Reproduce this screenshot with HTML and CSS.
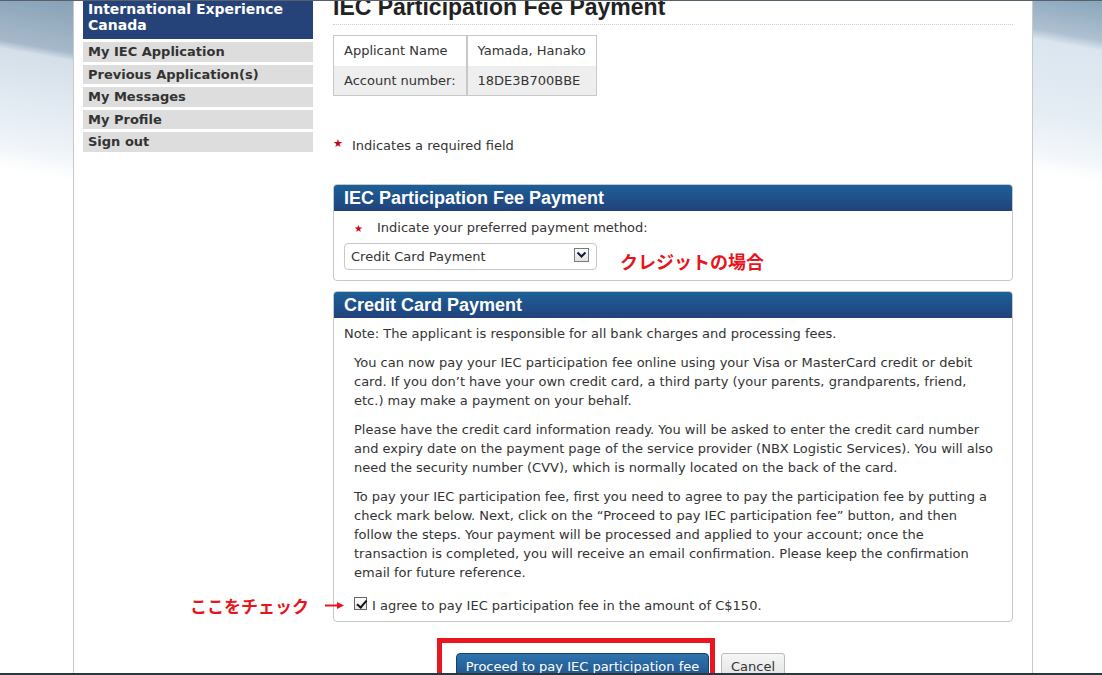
FILE: index.html
```html
<!DOCTYPE html>
<html lang="en">
<head>
    <meta charset="UTF-8">
    <meta name="viewport" content="width=device-width, initial-scale=1.0">
    <title>IEC Participation Fee Payment</title>
    <link rel="stylesheet" href="styles.css">
</head>
<body>
    <div class="page">
        <aside class="side">
            <div class="side-title">International Experience Canada</div>
            <ul class="side-menu">
                <li><a href="#">My IEC Application</a></li>
                <li><a href="#">Previous Application(s)</a></li>
                <li><a href="#">My Messages</a></li>
                <li><a href="#">My Profile</a></li>
                <li><a href="#">Sign out</a></li>
            </ul>
        </aside>

        <main class="main">
            <h1>IEC Participation Fee Payment</h1>

            <table class="info">
                <tr>
                    <td>Applicant Name</td>
                    <td>Yamada, Hanako</td>
                </tr>
                <tr>
                    <td>Account number:</td>
                    <td>18DE3B700BBE</td>
                </tr>
            </table>

            <p class="required"><span class="star">★</span>Indicates a required field</p>

            <section class="panel">
                <h2>IEC Participation Fee Payment</h2>
                <div class="panel-body">
                    <label class="field-label" for="method"><span class="star">★</span>Indicate your preferred payment method:</label>
                    <div class="select-row">
                        <div class="select">
                            <select id="method">
                                <option>Credit Card Payment</option>
                            </select>
                            <span class="select-arrow">
                                <svg width="11" height="8" viewBox="0 0 11 8"><path d="M1.5 1.5 L5.5 5.5 L9.5 1.5" fill="none" stroke="#0d1b36" stroke-width="2"/></svg>
                            </span>
                        </div>
                        <span class="memo memo-select">クレジットの場合</span>
                    </div>
                </div>
            </section>

            <section class="panel">
                <h2>Credit Card Payment</h2>
                <div class="panel-body">
                    <p class="note">Note: The applicant is responsible for all bank charges and processing fees.</p>
                    <p class="text">You can now pay your IEC participation fee online using your Visa or MasterCard credit or debit card. If you don’t have your own credit card, a third party (your parents, grandparents, friend, etc.) may make a payment on your behalf.</p>
                    <p class="text">Please have the credit card information ready. You will be asked to enter the credit card number and expiry date on the payment page of the service provider (NBX Logistic Services). You will also need the security number (CVV), which is normally located on the back of the card.</p>
                    <p class="text">To pay your IEC participation fee, first you need to agree to pay the participation fee by putting a check mark below. Next, click on the “Proceed to pay IEC participation fee” button, and then follow the steps. Your payment will be processed and applied to your account; once the transaction is completed, you will receive an email confirmation. Please keep the confirmation email for future reference.</p>
                    <div class="agree">
                        <span class="memo memo-check">ここをチェック
                            <svg width="20" height="9" viewBox="0 0 20 9"><path d="M0 4.5 H13" stroke="#e8141b" stroke-width="2"/><path d="M12 1 L19 4.5 L12 8 Z" fill="#e8141b"/></svg>
                        </span>
                        <input class="check" type="checkbox" id="agree" checked>
                        <label for="agree">I agree to pay IEC participation fee in the amount of C$150.</label>
                    </div>
                </div>
            </section>

            <div class="actions">
                <div class="mark">
                    <button class="btn-primary">Proceed to pay IEC participation fee</button>
                </div>
                <button class="btn">Cancel</button>
            </div>
        </main>
    </div>
</body>
</html>
```

FILE: styles.css
```css
html {
    overflow: hidden;
}

body {
    margin: 0;
    font-family: "DejaVu Sans", Verdana, sans-serif;
    font-size: 13px;
    color: #333;
    background-color: #fff;
    background-image:
        linear-gradient(190deg, #87a1b7 0px, #a6b9ca 52px, #d4dfe9 60px, #e2eaf2 110px, #eef3f8 150px, #ffffff 178px),
        linear-gradient(190deg, #89a4bb 0px, #aec1d1 40px, #dae5ef 50px, #e5edf4 120px, #f2f6fa 160px, #ffffff 180px);
    background-repeat: no-repeat;
    background-size: 73px 200px, 72px 200px;
    background-position: left top, right top;
}

body::before,
body::after {
    content: "";
    position: fixed;
    left: 0;
    right: 0;
    z-index: 5;
}

body::before {
    top: 0;
    height: 1px;
    background: #56616b;
}

body::after {
    bottom: 0;
    height: 2px;
    background: #2b363e;
}

.page {
    display: flex;
    gap: 20px;
    width: 930px;
    min-height: 760px;
    margin: -20px 0 0 73px;
    padding: 0 19px 0 9px;
    background: #fff;
    border-left: 1px solid #c9c9c9;
    border-right: 1px solid #c9c9c9;
}

/* sidebar */
.side {
    flex: none;
    width: 230px;
}

.side-title {
    padding: 21px 5px 6px;
    background: #254279;
    color: #fff;
    font-weight: bold;
    font-size: 14px;
    line-height: 16px;
}

.side-menu {
    display: flex;
    flex-direction: column;
    gap: 3px;
    list-style: none;
    margin: 3px 0 0;
    padding: 0;
}

.side-menu a {
    display: block;
    padding: 0 5px;
    background: #dddddd;
    color: #333;
    font-weight: bold;
    line-height: 19.5px;
    text-decoration: none;
}

/* main column */
.main {
    flex: none;
    width: 680px;
}

h1 {
    margin: 13px 0 0;
    padding-bottom: 3px;
    border-bottom: 1px dotted #cfcfcf;
    font: bold 23px/28px "Liberation Sans", Arial, sans-serif;
    color: #222;
}

.info {
    margin-top: 10px;
    border: 1px solid #c8c8c8;
    border-spacing: 0;
}

.info td {
    height: 29.5px;
    padding: 0 10px;
    white-space: nowrap;
}

.info td:first-child {
    border-right: 1px solid #c8c8c8;
}

.info td:last-child {
    border-left: 1px solid #c8c8c8;
}

.info tr:nth-child(2) td {
    background: #eeeeee;
}

.star {
    display: inline-block;
    color: #d0021b;
    font-size: 10px;
}

.required {
    margin: 37.5px 0 29.5px;
    line-height: 19px;
}

.required .star {
    width: 19px;
    font-size: 11px;
    vertical-align: 3px;
}

/* panels */
.panel {
    border: 1px solid #c8c8c8;
    border-radius: 4px;
}

.panel + .panel {
    margin-top: 10px;
}

.panel h2 {
    margin: 0;
    padding: 0 10px;
    border-radius: 3px 3px 0 0;
    background: linear-gradient(to bottom, #1c6097, #22427b);
    color: #fff;
    font: bold 18px/26px "Liberation Sans", Arial, sans-serif;
}

.panel-body {
    padding: 7px 10px 10px;
}

.panel + .panel .panel-body {
    padding: 6.5px 10px 6px;
}

.field-label {
    display: block;
    padding-left: 10px;
    line-height: 19px;
}

.field-label .star {
    width: 23px;
}

.select-row {
    display: flex;
    align-items: flex-start;
    gap: 23px;
    height: 27px;
    margin-top: 4.5px;
}

.select {
    position: relative;
    width: 253px;
    height: 27px;
    box-sizing: border-box;
    border: 1px solid #c8c8c8;
    border-radius: 4px;
}

.select select {
    appearance: none;
    width: 100%;
    height: 100%;
    padding: 0 0 0 6px;
    border: 0;
    background: transparent;
    font: 13px "DejaVu Sans", Verdana, sans-serif;
    color: #333;
}

.select-arrow {
    position: absolute;
    right: 7px;
    top: 4px;
    display: flex;
    align-items: center;
    justify-content: center;
    width: 15px;
    height: 14px;
    box-sizing: border-box;
    border: 1px solid #7a7a7a;
    background: linear-gradient(#ffffff, #e2e2e2);
    pointer-events: none;
}

.memo {
    color: #e8141b;
    font-family: "Noto Sans CJK JP", sans-serif;
    font-weight: bold;
    white-space: nowrap;
}

.memo-select {
    margin-top: 6px;
    font-size: 18px;
    line-height: 25px;
}

.note {
    margin: 0 0 10px;
    line-height: 19px;
}

.text {
    margin: 0 4px 10px 10px;
    line-height: 19px;
}

.agree {
    position: relative;
    display: flex;
    align-items: center;
    margin-top: 14px;
    padding-left: 10px;
    line-height: 19px;
}

.memo-check {
    position: absolute;
    right: calc(100% - 1px);
    top: 50%;
    transform: translateY(-50%);
    display: flex;
    align-items: center;
    gap: 16px;
    font-size: 17px;
    line-height: 24px;
}

.check {
    appearance: none;
    position: relative;
    width: 13px;
    height: 13px;
    margin: -4px 5px 0 0;
    border: 1px solid #666;
    background: linear-gradient(#ffffff, #e6e6e6);
}

.check:checked::after {
    content: "";
    position: absolute;
    left: 3.5px;
    top: 0;
    width: 3.5px;
    height: 7.5px;
    border: solid #111;
    border-width: 0 2px 2px 0;
    transform: rotate(40deg);
}

/* buttons */
.actions {
    display: flex;
    align-items: flex-start;
    margin-top: 16px;
    padding-left: 104px;
}

.mark {
    padding: 10px 1px 10px 14px;
    border: 5px solid #e9161f;
}

.btn-primary,
.btn {
    font: 13px/18px "DejaVu Sans", Verdana, sans-serif;
    cursor: pointer;
}

.btn-primary {
    width: 253px;
    padding: 4px 0 5px;
    border: 1px solid #173f6c;
    border-radius: 4px;
    background: linear-gradient(to bottom, #2f74ae, #1d4f87);
    color: #fff;
}

.btn {
    margin: 15px 0 0 6px;
    padding: 4px 9px 5px;
    border: 1px solid #bbb;
    border-radius: 3px;
    background: linear-gradient(to bottom, #f6f6f6, #e0e0e0);
    color: #333;
}
```
